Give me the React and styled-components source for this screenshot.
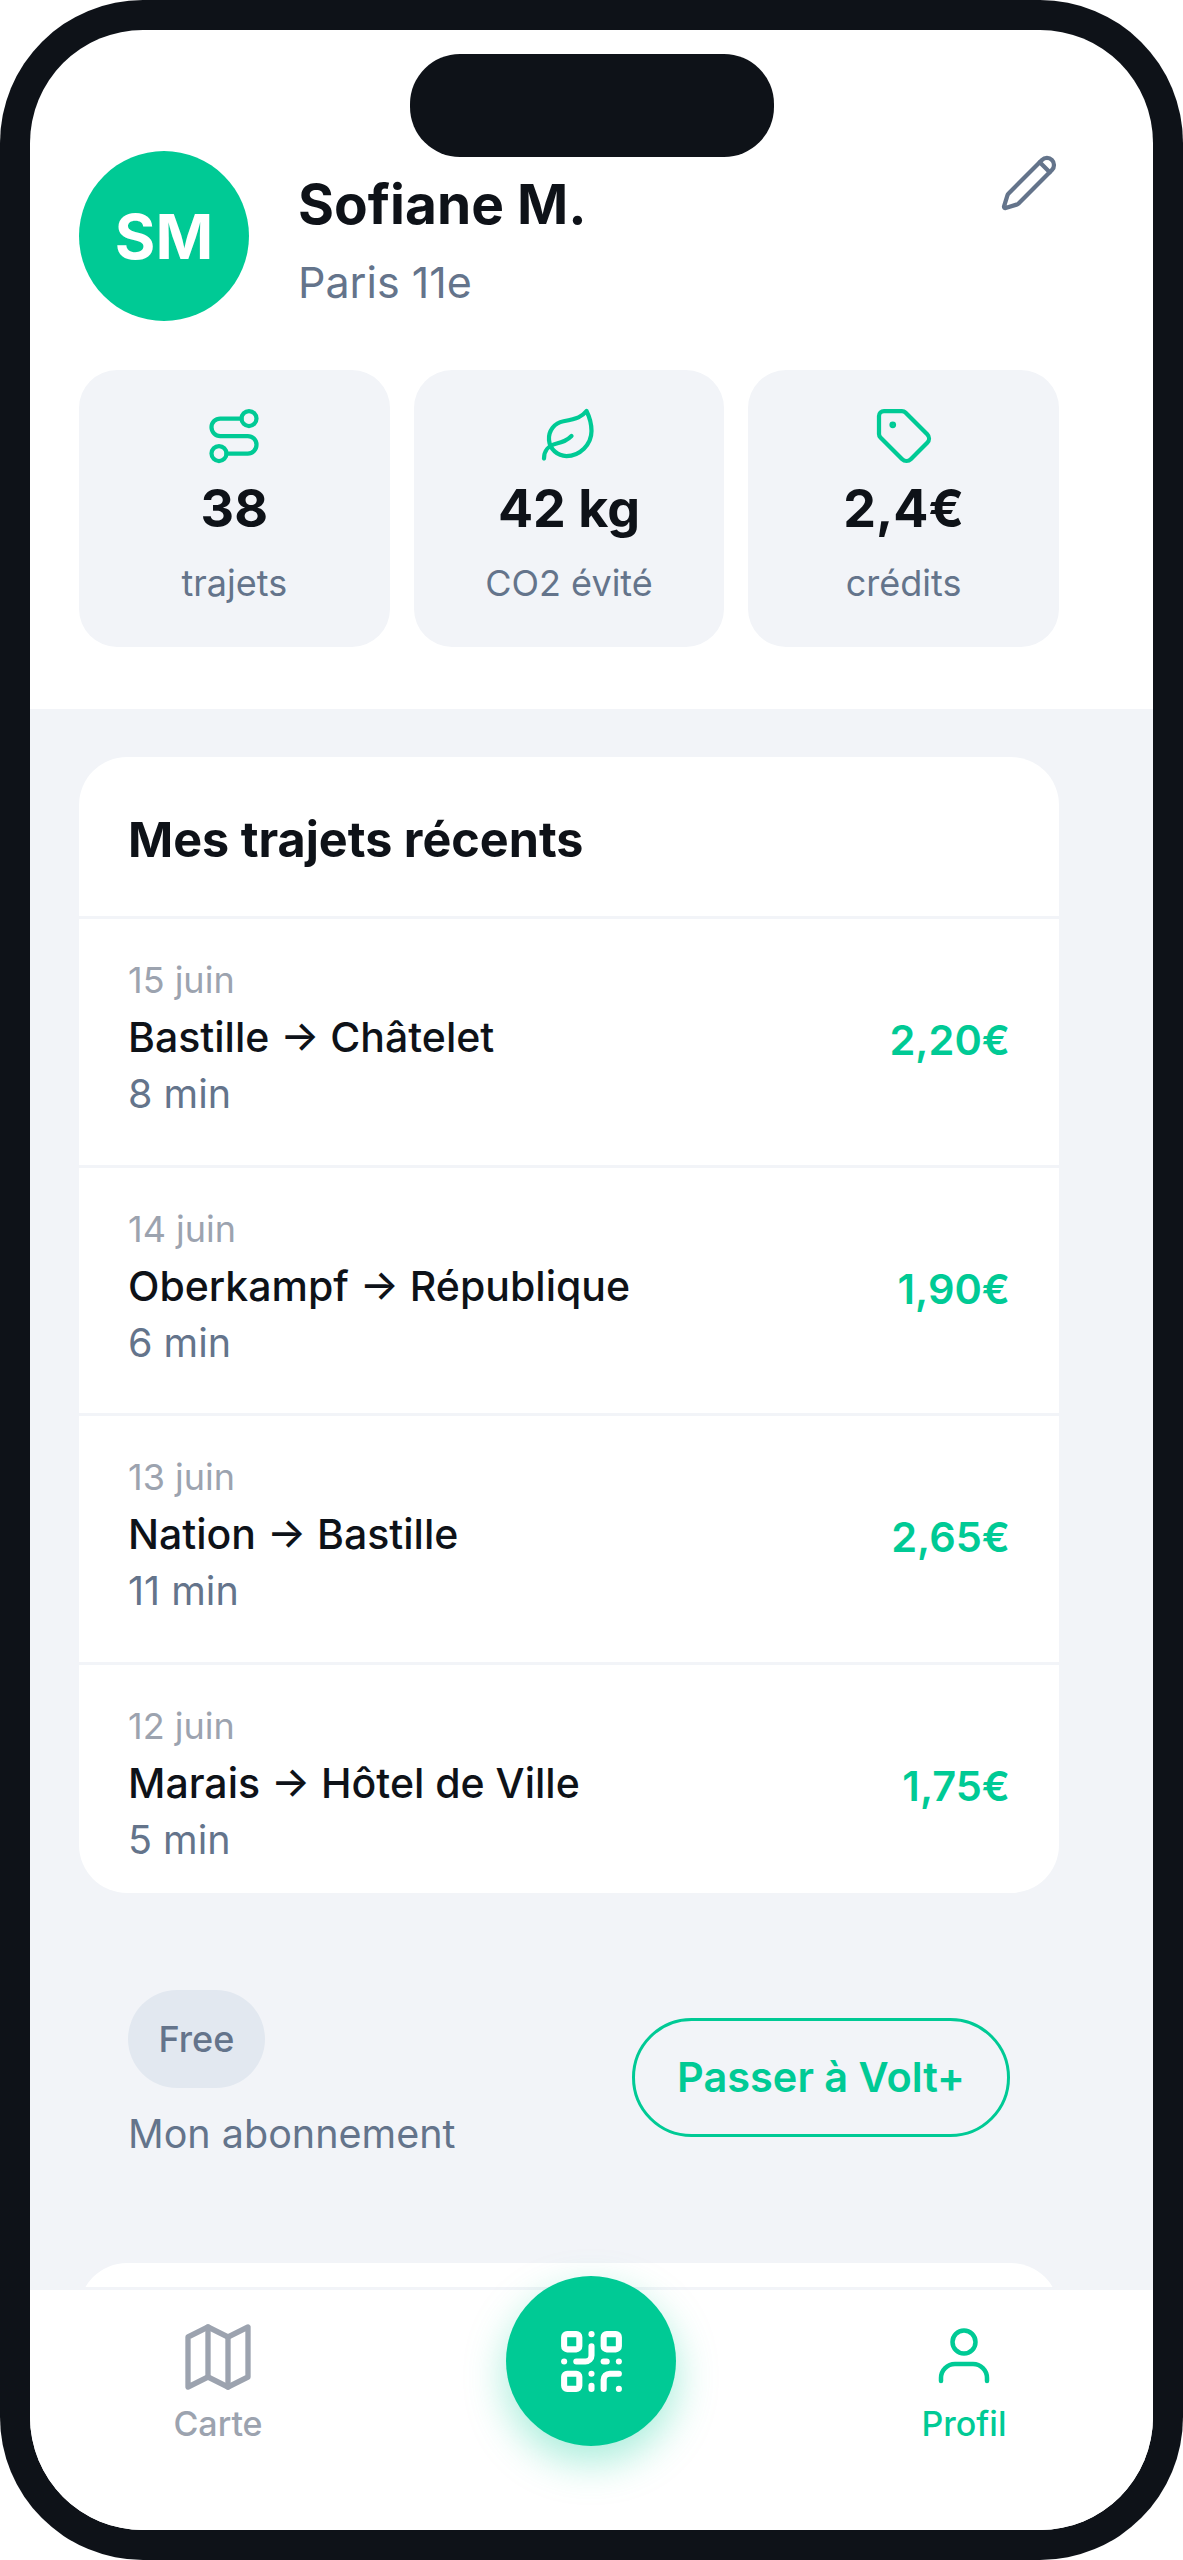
import React from 'react';
import styled, { createGlobalStyle } from 'styled-components';
import { Route, Leaf, Tag, QrCode } from 'lucide-react';

const GREEN = '#00ca95';
const DARK = '#0e1218';
const SLATE = '#64748b';
const MUTED = '#9ca3af';
const GREY = '#f2f4f8';

const Global = createGlobalStyle`
  html, body { margin: 0; padding: 0; background: #fff; }
  * { box-sizing: border-box; }
  body { font-family: Inter, "Liberation Sans", sans-serif; }
`;

const Phone = styled.div`
  width: 1183px;
  height: 2560px;
  background: ${DARK};
  border-radius: 143px;
  padding: 30px;
  position: relative;
`;

const Screen = styled.div`
  width: 100%;
  height: 100%;
  background: #fff;
  border-radius: 113px;
  overflow: hidden;
  display: flex;
  flex-direction: column;
  position: relative;
`;

const Notch = styled.div`
  position: absolute;
  top: 24px;
  left: 380px;
  width: 364px;
  height: 103px;
  border-radius: 50px;
  background: ${DARK};
`;

const Top = styled.section`
  height: 679px;
  flex: none;
  padding: 121px 94px 0 49px;
`;

const Profile = styled.div`
  display: flex;
  align-items: flex-start;
  height: 170px;
`;

const Avatar = styled.div`
  width: 170px;
  height: 170px;
  flex: none;
  border-radius: 50%;
  background: ${GREEN};
  color: #fff;
  display: flex;
  align-items: center;
  justify-content: center;
  font-size: 62px;
  font-weight: 700;
`;

const Who = styled.div`
  margin-left: 49px;
  flex: 1;
`;

const Name = styled.div`
  font-size: 55px;
  line-height: 70px;
  margin-top: 18px;
  font-weight: 700;
  color: ${DARK};
`;

const City = styled.div`
  font-size: 43px;
  line-height: 50px;
  margin-top: 18px;
  color: ${SLATE};
`;

const EditButton = styled.div`
  width: 60px;
  height: 60px;
  margin-top: 2px;
  color: ${SLATE};
  svg { width: 60px; height: 60px; display: block; }
`;

const Stats = styled.div`
  display: grid;
  grid-template-columns: repeat(3, 1fr);
  gap: 24px;
  margin-top: 49px;
`;

const Stat = styled.div`
  height: 277px;
  border-radius: 38px;
  background: ${GREY};
  display: flex;
  flex-direction: column;
  align-items: center;
  padding-top: 36px;
`;

const StatIcon = styled.div`
  height: 60px;
  color: ${GREEN};
  svg { width: 60px; height: 60px; display: block; }
`;

const StatValue = styled.div`
  font-size: 52px;
  line-height: 64px;
  margin-top: 11px;
  font-weight: 700;
  color: ${DARK};
`;

const StatLabel = styled.div`
  font-size: 36px;
  line-height: 44px;
  margin-top: 20px;
  color: ${SLATE};
`;

const Body = styled.main`
  flex: 1;
  min-height: 0;
  overflow: hidden;
  background: ${GREY};
  padding: 48px 94px 0 49px;
`;

const Card = styled.div`
  background: #fff;
  border-radius: 48px;
  overflow: hidden;
`;

const NextCard = styled(Card)`
  height: 200px;
`;

const CardTitle = styled.h2`
  margin: 0;
  height: 159px;
  padding: 6px 49px 0;
  display: flex;
  align-items: center;
  font-size: 48.5px;
  font-weight: 700;
  color: ${DARK};
`;

const Trip = styled.div`
  height: 248.5px;
  padding: 33px 49px 0;
  border-top: 3px solid ${GREY};
  display: flex;
  align-items: flex-start;
  justify-content: space-between;
  &:last-child { height: 231px; }
`;

const TripDate = styled.div`
  font-size: 36px;
  line-height: 57px;
  color: ${MUTED};
`;

const TripRoute = styled.div`
  font-size: 41px;
  line-height: 57px;
  font-weight: 500;
  color: ${DARK};
`;

const TripTime = styled.div`
  font-size: 39.5px;
  line-height: 57px;
  color: ${SLATE};
`;

const Price = styled.div`
  font-size: 41.5px;
  line-height: 57px;
  margin-top: 60px;
  font-weight: 600;
  color: ${GREEN};
`;

const Plan = styled.div`
  display: flex;
  justify-content: space-between;
  align-items: flex-start;
  padding: 97px 49px 0;
  height: 370px;
`;

const Pill = styled.div`
  width: 137px;
  height: 98px;
  border-radius: 49px;
  background: #e2e8f0;
  color: ${SLATE};
  display: flex;
  align-items: center;
  justify-content: center;
  font-size: 36px;
  font-weight: 500;
`;

const PlanLabel = styled.div`
  font-size: 39.5px;
  line-height: 50px;
  margin-top: 21px;
  color: ${SLATE};
`;

const Upgrade = styled.button`
  width: 378px;
  height: 119px;
  margin-top: 28px;
  border: 3px solid ${GREEN};
  border-radius: 60px;
  background: transparent;
  color: ${GREEN};
  font: 600 41.5px Inter, "Liberation Sans", sans-serif;
`;

const Nav = styled.nav`
  height: 243px;
  flex: none;
  background: #fff;
  border-top: 3px solid ${GREY};
  display: flex;
  justify-content: space-between;
  padding: 0 89px 0 88px;
  position: relative;
`;

const NavItem = styled.div`
  width: 200px;
  display: flex;
  flex-direction: column;
  align-items: center;
  padding-top: 27px;
  color: ${({ $active }) => ($active ? GREEN : MUTED)};
  font-size: 34px;
  font-weight: 500;
  svg { width: 80px; height: 80px; display: block; }
  span { margin-top: 6px; line-height: 42px; }
`;

const Fab = styled.button`
  position: absolute;
  top: -14px;
  left: 476px;
  width: 170px;
  height: 170px;
  border: none;
  border-radius: 50%;
  background: ${GREEN};
  color: #fff;
  display: flex;
  align-items: center;
  justify-content: center;
  box-shadow: 0 16px 40px rgba(0, 202, 149, 0.35);
  svg { width: 73px; height: 73px; }
`;

const EditIcon = () => (
  <svg viewBox="0 0 24 24" fill="none" stroke="currentColor" strokeWidth="1.7" strokeLinecap="round" strokeLinejoin="round">
    <path d="M21.174 6.812a1 1 0 0 0-3.986-3.987L3.842 16.174a2 2 0 0 0-.5.83l-1.321 4.352a.5.5 0 0 0 .623.622l4.353-1.32a2 2 0 0 0 .83-.497z" />
    <path d="m16.3 3.7 4 4" />
  </svg>
);

// the older folded-map outline, lucide's current one has soft corners
const MapIcon = () => (
  <svg viewBox="0 0 24 24" fill="none" stroke="currentColor" strokeWidth="1.6" strokeLinecap="round" strokeLinejoin="round">
    <polygon points="3 6 9 3 15 6 21 3 21 18 15 21 9 18 3 21" />
    <line x1="9" y1="3" x2="9" y2="18" />
    <line x1="15" y1="6" x2="15" y2="21" />
  </svg>
);

const ProfileIcon = () => (
  <svg viewBox="0 0 80 80" fill="none" stroke="currentColor" strokeWidth="4.5" strokeLinecap="round" strokeLinejoin="round">
    <circle cx="40" cy="25" r="11.5" />
    <path d="M17 64v-3a14 14 0 0 1 14-14h18a14 14 0 0 1 14 14v3" />
  </svg>
);

const trips = [
  { date: '15 juin', route: 'Bastille → Châtelet', time: '8 min', price: '2,20€' },
  { date: '14 juin', route: 'Oberkampf → République', time: '6 min', price: '1,90€' },
  { date: '13 juin', route: 'Nation → Bastille', time: '11 min', price: '2,65€' },
  { date: '12 juin', route: 'Marais → Hôtel de Ville', time: '5 min', price: '1,75€' },
];

const stats = [
  { icon: <Route strokeWidth={1.7} />, value: '38', label: 'trajets' },
  { icon: <Leaf strokeWidth={1.7} />, value: '42 kg', label: 'CO2 évité' },
  { icon: <Tag strokeWidth={1.7} />, value: '2,4€', label: 'crédits' },
];

export default function App() {
  return (
    <>
      <Global />
      <Phone>
        <Screen>
          <Top>
            <Profile>
              <Avatar>SM</Avatar>
              <Who>
                <Name>Sofiane M.</Name>
                <City>Paris 11e</City>
              </Who>
              <EditButton>
                <EditIcon />
              </EditButton>
            </Profile>
            <Stats>
              {stats.map((s) => (
                <Stat key={s.label}>
                  <StatIcon>{s.icon}</StatIcon>
                  <StatValue>{s.value}</StatValue>
                  <StatLabel>{s.label}</StatLabel>
                </Stat>
              ))}
            </Stats>
          </Top>
          <Body>
            <Card>
              <CardTitle>Mes trajets récents</CardTitle>
              {trips.map((t) => (
                <Trip key={t.date}>
                  <div>
                    <TripDate>{t.date}</TripDate>
                    <TripRoute>{t.route}</TripRoute>
                    <TripTime>{t.time}</TripTime>
                  </div>
                  <Price>{t.price}</Price>
                </Trip>
              ))}
            </Card>
            <Plan>
              <div>
                <Pill>Free</Pill>
                <PlanLabel>Mon abonnement</PlanLabel>
              </div>
              <Upgrade>Passer à Volt+</Upgrade>
            </Plan>
            <NextCard />
          </Body>
          <Nav>
            <NavItem>
              <MapIcon />
              <span>Carte</span>
            </NavItem>
            <NavItem $active>
              <ProfileIcon />
              <span>Profil</span>
            </NavItem>
            <Fab>
              <QrCode />
            </Fab>
          </Nav>
          <Notch />
        </Screen>
      </Phone>
    </>
  );
}
